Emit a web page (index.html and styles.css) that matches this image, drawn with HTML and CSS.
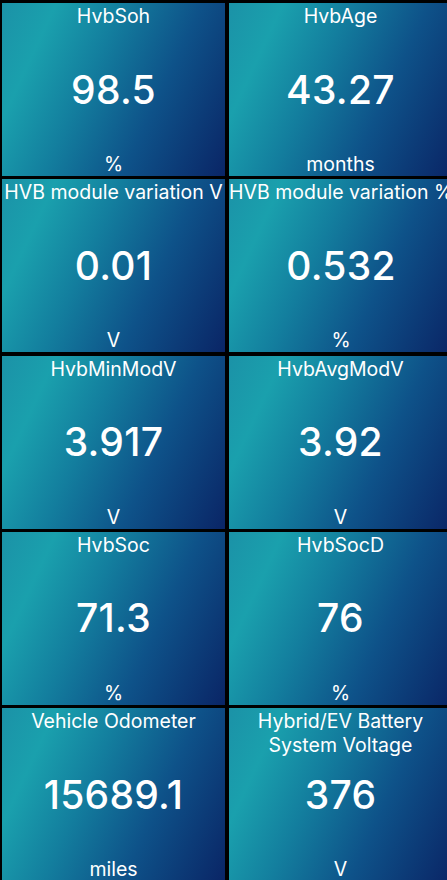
FILE: index.html
```html
<!DOCTYPE html>
<html lang="en">
<head>
<meta charset="utf-8">
<title>HVB Gauges</title>
<link rel="stylesheet" href="styles.css">
</head>
<body>
<main class="grid">
  <section class="tile"><div class="title">HvbSoh</div><div class="value">98.5</div><div class="unit">%</div></section>
  <section class="tile"><div class="title">HvbAge</div><div class="value">43.27</div><div class="unit">months</div></section>
  <section class="tile"><div class="title">HVB module variation V</div><div class="value">0.01</div><div class="unit">V</div></section>
  <section class="tile"><div class="title">HVB module variation %</div><div class="value">0.532</div><div class="unit">%</div></section>
  <section class="tile"><div class="title">HvbMinModV</div><div class="value">3.917</div><div class="unit">V</div></section>
  <section class="tile"><div class="title">HvbAvgModV</div><div class="value">3.92</div><div class="unit">V</div></section>
  <section class="tile"><div class="title">HvbSoc</div><div class="value">71.3</div><div class="unit">%</div></section>
  <section class="tile"><div class="title">HvbSocD</div><div class="value">76</div><div class="unit">%</div></section>
  <section class="tile"><div class="title">Vehicle Odometer</div><div class="value">15689.1</div><div class="unit">miles</div></section>
  <section class="tile"><div class="title">Hybrid/EV Battery System Voltage</div><div class="value">376</div><div class="unit">V</div></section>
</main>
</body>
</html>
```

FILE: styles.css
```css
html, body {
  margin: 0;
  padding: 0;
  background: #000;
  width: 447px;
  height: 880px;
  overflow: hidden;
}

.grid {
  display: grid;
  grid-template-columns: 223px 223px;
  grid-auto-rows: 173px;
  column-gap: 4px;
  row-gap: 3.25px;
  padding: 3px 0 0 2px;
  width: 460px;
  font-family: Inter, "Liberation Sans", sans-serif;
  color: #fff;
}

.tile {
  display: grid;
  grid-template-rows: 1fr auto 1fr;
  text-align: center;
  overflow: hidden;
  background: linear-gradient(115deg, #1b92a7 0%, #1aa0ad 18%, #137e9e 40%, #0e5289 66%, #0a2566 100%);
}

.title {
  align-self: start;
  font-size: 19.5px;
  line-height: 24px;
  padding: 1px 4px 0;
}

.tile:nth-child(3) .title,
.tile:nth-child(4) .title {
  white-space: nowrap;
  padding: 1px 0 0;
}

.value {
  font-size: 39px;
  font-weight: 500;
  line-height: 44px;
  letter-spacing: 0.3px;
}

.unit {
  align-self: end;
  font-size: 19.5px;
  line-height: 24px;
}
```
